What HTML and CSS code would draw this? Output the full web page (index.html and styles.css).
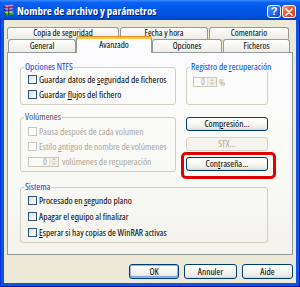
FILE: index.html
```html
<!DOCTYPE html>
<html lang="es">
<head>
<meta charset="utf-8">
<title>Nombre de archivo y parámetros</title>
<link rel="stylesheet" href="styles.css">
</head>
<body>
<div class="window">
  <div class="titlebar">
    <svg class="appicon" width="12" height="13" viewBox="0 0 12 13">
      <path d="M1 1.5 L9 0.5 L11 2 L3 3.2 Z" fill="#f07a9a"/>
      <path d="M1 1.5 L3 3.2 L3 5 L1 3.5 Z" fill="#8a1030"/>
      <path d="M3 3.2 L11 2 L11 3.8 L3 5 Z" fill="#c8204a"/>
      <path d="M1 4.5 L9 3.8 L11 5.3 L3 6.4 Z" fill="#9a8ff0"/>
      <path d="M1 4.5 L3 6.4 L3 8.2 L1 6.6 Z" fill="#201a70"/>
      <path d="M3 6.4 L11 5.3 L11 7.1 L3 8.2 Z" fill="#4a3ad0"/>
      <path d="M1 7.8 L9 7.1 L11 8.6 L3 9.7 Z" fill="#8fe08a"/>
      <path d="M1 7.8 L3 9.7 L3 11.6 L1 10 Z" fill="#145a18"/>
      <path d="M3 9.7 L11 8.6 L11 10.4 L3 11.6 Z" fill="#2fa03a"/>
      <path d="M5.2 2.8 L6.4 2.6 L6.4 11 L5.2 11.2 Z" fill="#3a2a10" opacity="0.85"/>
    </svg>
    <span class="title">Nombre de archivo y parámetros</span>
    <div class="tbtns">
      <span class="tbtn help">?</span>
      <span class="tbtn close"><svg width="8" height="8" viewBox="0 0 8 8"><path d="M1 1 L7 7 M7 1 L1 7" stroke="#fff" stroke-width="1.7" stroke-linecap="round"/></svg></span>
    </div>
  </div>
  <div class="client">
    <div class="tabs">
      <div class="tabrow back">
        <div class="tab t-copia">Copia de seguridad</div>
        <div class="tab t-fecha">Fecha y hora</div>
        <div class="tab t-coment">Comentario</div>
      </div>
      <div class="tabrow front">
        <div class="tab t-general">General</div>
        <div class="tab t-avanzado active">Avanzado</div>
        <div class="tab t-opciones">Opciones</div>
        <div class="tab t-ficheros">Ficheros</div>
      </div>
    </div>
    <div class="panel">
      <div class="grid">
        <fieldset class="group">
          <legend>Opciones NTFS</legend>
          <div class="check"><span class="box"></span><span>Guardar datos de <u>s</u>eguridad de ficheros</span></div>
          <div class="check"><span class="box"></span><span>Guardar <u>f</u>lujos del fichero</span></div>
        </fieldset>
        <fieldset class="group">
          <legend>Registro de <u>r</u>ecuperación</legend>
          <div class="spinrow reg">
            <span class="spin w-reg"><span class="val">0</span><span class="arrows"><span class="up"></span><span class="down"></span></span></span>
            <span class="disabled pct">%</span>
          </div>
        </fieldset>
        <fieldset class="group vol">
          <legend class="dim">Volúmenes</legend>
          <div class="check disabled"><span class="box"></span><span>Pausa después de cada volumen</span></div>
          <div class="check disabled"><span class="box"></span><span>Estilo <u>a</u>ntiguo de nombre de volúmenes</span></div>
          <div class="spinrow disabled">
            <span class="spin w-vol"><span class="val">0</span><span class="arrows"><span class="up"></span><span class="down"></span></span></span>
            <span class="after">volúmenes de re<u>c</u>uperación</span>
          </div>
        </fieldset>
        <div class="btncol">
          <div class="btn">Com<u>p</u>resión...</div>
          <div class="btn off">SFX...</div>
          <div class="hl"><div class="btn">Con<u>t</u>raseña...</div></div>
        </div>
        <fieldset class="group sistema">
          <legend>Sistema</legend>
          <div class="check row16"><span class="box"></span><span>Procesado en <u>s</u>egundo plano</span></div>
          <div class="check row16"><span class="box"></span><span>Apagar el e<u>q</u>uipo al finalizar</span></div>
          <div class="check row16"><span class="box"></span><span><u>E</u>sperar si hay copias de WinRAR activas</span></div>
        </fieldset>
      </div>
    </div>
    <div class="footer">
      <div class="btn dlg default">OK</div>
      <div class="btn dlg w-annuler">Annuler</div>
      <div class="btn dlg">Aide</div>
    </div>
  </div>
</div>
</body>
</html>
```
FILE: styles.css
```css
* { box-sizing: border-box; }
html, body { margin: 0; padding: 0; }
body {
  width: 300px;
  height: 287px;
  overflow: hidden;
  font-family: "Open Sans", "Liberation Sans", Arial, sans-serif;
  font-stretch: 75%;
  font-size: 9.4px;
  line-height: 11px;
  color: #000;
  background: #fff;
}
u { text-decoration-thickness: 1px; text-underline-offset: 1px; }

.window {
  width: 300px;
  height: 287px;
  display: flex;
  flex-direction: column;
  background: #0a55e4;
  box-shadow: inset 1px 0 #0831d9, inset -1px 0 #00138c, inset 0 -1px #00138c;
}

.titlebar {
  height: 20px;
  flex: none;
  display: flex;
  align-items: center;
  padding-left: 3px;
  background: linear-gradient(to bottom, #3b8cff 0%, #0a62f4 12%, #0058ee 35%, #0054e3 65%, #004ed8 88%, #0040c0 100%);
}
.appicon { flex: none; margin-top: 1px; }
.title {
  margin-left: 2px;
  color: #fff;
  font-family: "Open Sans", "Liberation Sans", Arial, sans-serif;
  font-stretch: 75%;
  font-weight: bold;
  font-size: 11px;
  text-shadow: 1px 1px 0 #0a2180;
  white-space: nowrap;
}
.tbtns {
  margin-left: auto;
  margin-right: 4px;
  display: flex;
  gap: 1px;
  align-self: flex-start;
  margin-top: 5px;
}
.tbtn {
  width: 14px;
  height: 13px;
  border: 1px solid #fff;
  border-radius: 3px;
  display: flex;
  align-items: center;
  justify-content: center;
  color: #fff;
}
.help {
  background: linear-gradient(135deg, #5b9bff 0%, #2a6ff0 40%, #0d4fd6 100%);
  font-family: "Liberation Sans", Arial, sans-serif;
  font-stretch: 100%;
  font-weight: bold;
  font-size: 11px;
}
.close {
  background: linear-gradient(135deg, #f39a7c 0%, #e4603a 40%, #c8401d 100%);
}

.client {
  flex: 1;
  margin: 0 4px 4px 4px;
  background: #ece9d8;
  padding: 7px 3px 0 3px;
  display: flex;
  flex-direction: column;
}

.tabs { display: flex; flex-direction: column; margin-bottom: -1px; }
.tabrow { display: flex; }
.tabrow.back { height: 12px; gap: 1px; }
.tabrow.front { height: 14px; align-items: flex-end; padding-left: 1px; }
.tab {
  border: 1px solid #919b9c;
  border-bottom: none;
  border-radius: 3px 3px 0 0;
  background: linear-gradient(to bottom, #ffffff 0%, #f6f5f0 50%, #ecebe5 100%);
  text-align: center;
  white-space: nowrap;
  line-height: 10px;
  height: 100%;
  font-size: 9px;
}
.tabrow.front .tab { height: 14px; line-height: 12px; }
.t-copia { width: 112px; }
.t-fecha { width: 88px; }
.t-coment { width: 80px; }
.t-general { width: 68px; }
.t-avanzado { width: 76px; }
.t-opciones { width: 70px; }
.t-ficheros { width: 67px; margin-left: 1px; }
.tabrow.front .tab.active {
  position: relative;
  z-index: 1;
  height: 17px;
  line-height: 13px;
  background: #fcfcfe;
  border-top: 1px solid #e68b2c;
  box-shadow: inset 0 2px 0 #ffc73c;
  padding-top: 1px;
}

.panel {
  height: 203px;
  flex: none;
  border: 1px solid #919b9c;
  background: linear-gradient(to bottom, #fcfcfe 0%, #f8f8f4 70%, #f4f3ee 100%);
  padding: 9px 0 11px 12px;
}
.grid {
  display: grid;
  grid-template-columns: 156px 82px;
  column-gap: 10px;
  row-gap: 7px;
}

.group {
  margin: 0;
  min-width: 0;
  padding: 0 5px 2px 3px;
  border: 1px solid #d0d0bf;
  border-radius: 3px;
}
.group legend {
  padding: 0 1px;
  line-height: 10px;
  color: #0046d5;
  white-space: nowrap;
}
.group legend.dim { color: #45526a; }
.group.vol { padding-top: 2px; }
.group.sistema { grid-column: 1 / 3; margin-top: 3px; }

.check {
  display: flex;
  align-items: center;
  height: 15px;
  padding-left: 4px;
  white-space: nowrap;
}
.check.row16 { height: 16px; }
.box {
  flex: none;
  width: 9px;
  height: 9px;
  margin-right: 2px;
  border: 1px solid #2f5679;
  background: linear-gradient(135deg, #dcdcd5 0%, #f4f4f0 60%, #ffffff 100%);
}
.disabled { color: #aca899; }
.check.disabled .box { border-color: #c9c7ba; background: #fff; }

.spinrow {
  display: flex;
  align-items: center;
  height: 15px;
  padding-left: 4px;
  white-space: nowrap;
}
.spinrow.reg { height: 10px; margin-top: 5px; padding-left: 3px; }
.spin {
  display: flex;
  height: 10px;
  border: 1px solid #c9c7ba;
  background: #fbfbf8;
  flex: none;
}
.w-reg { width: 24px; }
.w-vol { width: 31px; }
.spin .val {
  flex: 1;
  text-align: right;
  color: #aca899;
  line-height: 8px;
  padding-right: 2px;
}
.arrows {
  width: 9px;
  display: flex;
  flex-direction: column;
  border-left: 1px solid #e2e0d4;
}
.arrows span {
  flex: 1;
  background: #f2f1ea;
  display: flex;
  align-items: center;
  justify-content: center;
}
.arrows .up { border-bottom: 1px solid #e2e0d4; }
.arrows .up::before {
  content: "";
  border-left: 2px solid transparent;
  border-right: 2px solid transparent;
  border-bottom: 2px solid #c9c7ba;
}
.arrows .down::before {
  content: "";
  border-left: 2px solid transparent;
  border-right: 2px solid transparent;
  border-top: 2px solid #c9c7ba;
}
.pct { margin-left: 2px; }
.after { margin-left: 3px; }

.btncol {
  display: flex;
  flex-direction: column;
  gap: 6px;
  margin-top: 5px;
}
.btn {
  height: 14px;
  border: 1px solid #003c74;
  border-radius: 3px;
  background: linear-gradient(to bottom, #ffffff 0%, #f6f6f2 50%, #ecebe6 85%, #d6d0c5 100%);
  text-align: center;
  line-height: 12px;
  white-space: nowrap;
}
.btn.off {
  border-color: #d8d6ca;
  background: #f4f3ee;
  color: #aca899;
}
.hl { position: relative; }
.hl::after {
  content: "";
  position: absolute;
  left: -5px;
  top: -5px;
  right: -8px;
  bottom: -8px;
  border: 3px solid #e00000;
  border-radius: 5px;
}

.footer {
  display: flex;
  justify-content: flex-end;
  gap: 5px;
  margin-top: 9px;
}
.btn.dlg { width: 51px; height: 15px; line-height: 13px; }
.btn.dlg.default { width: 50px; box-shadow: inset 0 0 0 1px #98b8ea, inset 0 -1px 0 1px #7aa0e0; }
.btn.dlg.w-annuler { width: 53px; }
```
